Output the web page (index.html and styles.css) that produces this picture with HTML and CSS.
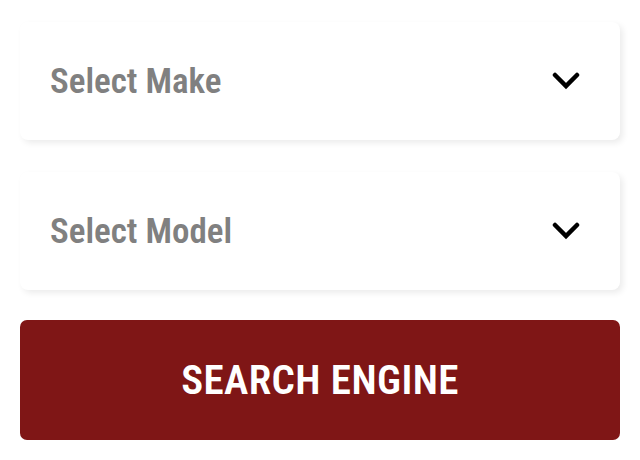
FILE: index.html
```html
<!DOCTYPE html>
<html lang="en">
<head>
  <meta charset="UTF-8" />
  <title>Engine Finder</title>
  <meta name="viewport" content="width=device-width, initial-scale=1.0" />
  <link rel="stylesheet" href="styles.css">
</head>
<body>

  <form class="finder">
    <div class="select-box">
      <span class="placeholder">Select Make</span>
      <svg class="chevron" viewBox="0 0 28 18" width="28" height="18">
        <polyline points="3,3 14,14 25,3" />
      </svg>
    </div>

    <div class="select-box">
      <span class="placeholder">Select Model</span>
      <svg class="chevron" viewBox="0 0 28 18" width="28" height="18">
        <polyline points="3,3 14,14 25,3" />
      </svg>
    </div>

    <button type="button" class="search-btn">SEARCH ENGINE</button>
  </form>

</body>
</html>
```

FILE: styles.css
```css
* {
  margin: 0;
  padding: 0;
  box-sizing: border-box;
}

body {
  font-family: Roboto, 'Liberation Sans', sans-serif;
  font-stretch: condensed;
  background: #fff;
  padding: 22px 20px 20px;
}

.finder {
  display: flex;
  flex-direction: column;
}

.select-box {
  display: flex;
  align-items: center;
  justify-content: space-between;
  height: 118px;
  padding: 0 40px 0 30px;
  margin-bottom: 32px;
  background: #fff;
  border-radius: 8px;
  box-shadow: 3px 3px 6px rgba(0, 0, 0, 0.08);
}

.select-box + .select-box {
  margin-bottom: 30px;
}

.placeholder {
  font-size: 35px;
  font-weight: 600;
  color: #808080;
}

.chevron polyline {
  fill: none;
  stroke: #000;
  stroke-width: 4.5;
  stroke-linecap: round;
  stroke-linejoin: miter;
}

.search-btn {
  height: 120px;
  border: none;
  border-radius: 7px;
  background: #7f1616;
  color: #fff;
  font-family: inherit;
  font-stretch: condensed;
  font-size: 41px;
  font-weight: 600;
  letter-spacing: 0.4px;
  cursor: pointer;
}
```
